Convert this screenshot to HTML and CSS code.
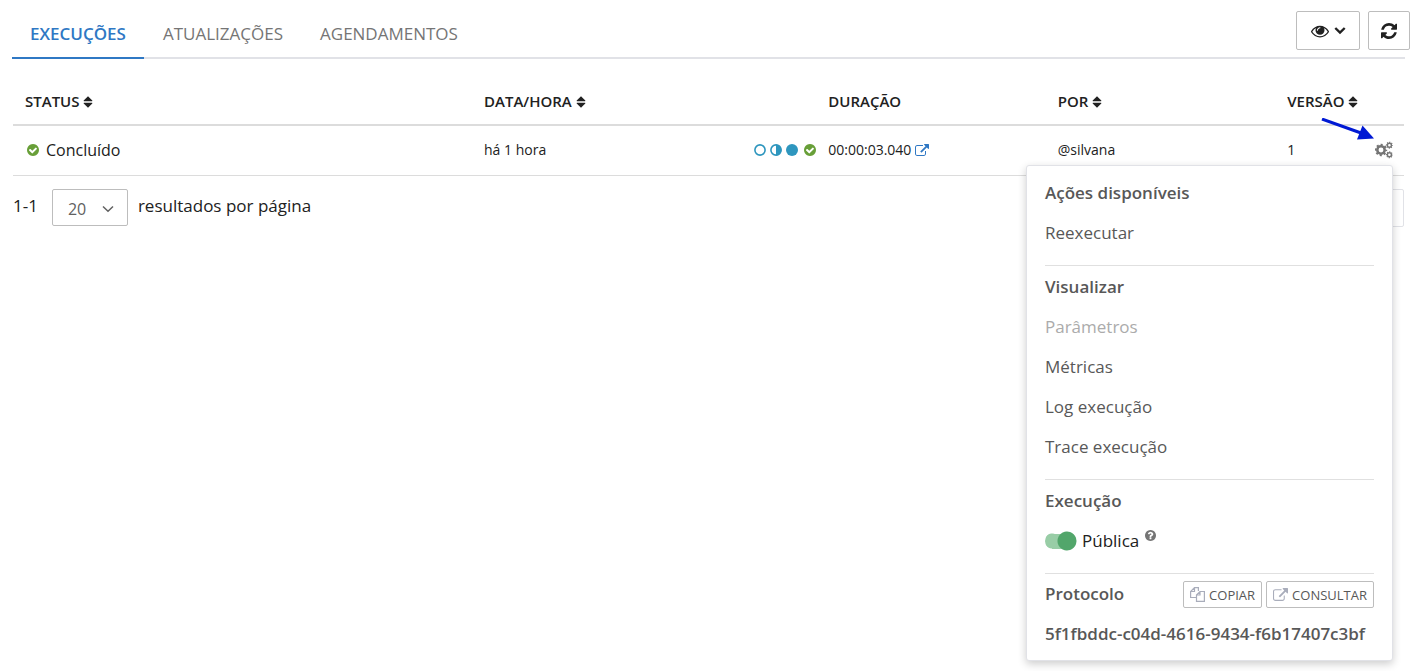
FILE: index.html
```
<!DOCTYPE html>
<html lang="pt-BR">
<head>
<meta charset="utf-8">
<meta name="viewport" content="width=device-width, initial-scale=1">
<title>Execuções</title>
<link rel="stylesheet" href="styles.css">
</head>
<body>
<svg class="sprite" aria-hidden="true">
  <symbol id="check" viewBox="128 128 1536 1536"><path d="M1412 734q0-28-18-46l-91-90q-19-19-45-19t-45 19l-408 407-226-226q-19-19-45-19t-45 19l-91 90q-18 18-18 46 0 27 18 45l362 362q19 19 45 19 27 0 46-19l543-543q18-18 18-45zm252 162q0 209-103 385.5t-279.5 279.5-385.5 103-385.5-103-279.5-279.5-103-385.5 103-385.5 279.5-279.5 385.5-103 385.5 103 279.5 279.5 103 385.5z"/></symbol>
  <symbol id="external" viewBox="64 64 1792 1536"><path d="M1472 992v320q0 119-84.5 203.5t-203.5 84.5h-832q-119 0-203.5-84.5t-84.5-203.5v-832q0-119 84.5-203.5t203.5-84.5h704q14 0 23 9t9 23v64q0 14-9 23t-23 9h-704q-66 0-113 47t-47 113v832q0 66 47 113t113 47h832q66 0 113-47t47-113v-320q0-14 9-23t23-9h64q14 0 23 9t9 23zm384-864v512q0 26-19 45t-45 19-45-19l-176-176-652 652q-10 10-23 10t-23-10l-114-114q-10-10-10-23t10-23l652-652-176-176q-19-19-19-45t19-45 45-19h512q26 0 45 19t19 45z"/></symbol>
  <symbol id="sort" viewBox="0 0 10 12"><path d="M5 0.3 9.3 4.6Q9.6 5.2 9 5.2H1Q.4 5.2.7 4.6ZM5 11.7.7 7.4Q.4 6.8 1 6.8H9Q9.6 6.8 9.3 7.4Z"/></symbol>
</svg>
<main class="page">
  <header class="topbar">
    <nav class="tabs">
      <a class="tab tab-active" href="#">EXECUÇÕES</a>
      <a class="tab" href="#">ATUALIZAÇÕES</a>
      <a class="tab" href="#">AGENDAMENTOS</a>
    </nav>
    <div class="tools">
      <button class="tool tool-wide" type="button" aria-label="Colunas visíveis">
        <svg width="18" height="18" viewBox="0 0 1792 1792"><path d="M1664 960q-152-236-381-353 61 104 61 225 0 185-131.5 316.5t-316.5 131.5-316.5-131.5-131.5-316.5q0-121 61-225-229 117-381 353 133 205 333.5 326.5t434.5 121.5 434.5-121.5 333.5-326.5zm-720-384q0-20-14-34t-34-14q-125 0-214.5 89.5t-89.5 214.5q0 20 14 34t34 14 34-14 14-34q0-86 61-147t147-61q20 0 34-14t14-34zm848 384q0 34-20 69-140 230-376.5 368.5t-499.5 138.5-499.5-139-376.5-368q-20-35-20-69t20-69q140-229 376.5-368t499.5-139 499.5 139 376.5 368q20 35 20 69z"/></svg>
        <svg width="12" height="8" viewBox="0 0 12 8"><path d="M1.3 1 6 5.600 10.7 1" fill="none" stroke="currentColor" stroke-width="2.4"/></svg>
      </button>
      <button class="tool" type="button" aria-label="Atualizar">
        <svg width="16" height="16" viewBox="128 128 1536 1536"><path d="M1639 1056q0 5-1 7-64 268-268 434.5t-478 166.5q-146 0-282.5-55t-243.5-157l-129 129q-19 19-45 19t-45-19-19-45v-448q0-26 19-45t45-19h448q26 0 45 19t19 45-19 45l-137 137q71 66 161 102t187 36q134 0 250-65t186-179q11-17 53-117 8-23 30-23h192q13 0 22.5 9.5t9.5 22.5zm25-800v448q0 26-19 45t-45 19h-448q-26 0-45-19t-19-45 19-45l138-138q-148-137-349-137-134 0-250 65t-186 179q-11 17-53 117-8 23-30 23h-199q-13 0-22.5-9.5t-9.5-22.5v-7q65-268 270-434.5t480-166.5q146 0 284 55.5t245 156.5l130-129q19-19 45-19t45 19 19 45z"/></svg>
      </button>
    </div>
  </header>

  <section class="content">
    <table class="runs">
      <colgroup><col class="c-status"><col class="c-date"><col class="c-steps"><col class="c-time"><col class="c-by"><col class="c-version"><col></colgroup>
      <thead>
        <tr>
          <th>STATUS <svg class="sort"><use href="#sort"/></svg></th>
          <th>DATA/HORA <svg class="sort"><use href="#sort"/></svg></th>
          <th></th>
          <th>DURAÇÃO</th>
          <th>POR <svg class="sort"><use href="#sort"/></svg></th>
          <th>VERSÃO <svg class="sort"><use href="#sort"/></svg></th>
          <th></th>
        </tr>
      </thead>
      <tbody>
        <tr>
          <td><div class="status"><svg class="dot green"><use href="#check"/></svg>Concluído</div></td>
          <td>há 1 hora</td>
          <td>
            <div class="steps">
              <svg class="dot" viewBox="0 0 12 12"><circle cx="6" cy="6" r="5.1" fill="none" stroke="currentColor" stroke-width="1.6"/></svg>
              <svg class="dot" viewBox="0 0 12 12"><circle cx="6" cy="6" r="5.1" fill="none" stroke="currentColor" stroke-width="1.6"/><path d="M6 .5a5.5 5.5 0 0 1 0 11z"/></svg>
              <svg class="dot" viewBox="0 0 12 12"><circle cx="6" cy="6" r="6"/></svg>
              <svg class="dot dot-end green"><use href="#check"/></svg>
            </div>
          </td>
          <td><div class="time">00:00:03.040 <a class="open" href="#" aria-label="Abrir execução"><svg width="14" height="12"><use href="#external"/></svg></a></div></td>
          <td>@silvana</td>
          <td>1</td>
          <td class="actions">
            <div class="menu-anchor">
              <button class="gear" type="button" aria-label="Ações">
                <svg class="outline" width="18" height="18" viewBox="0 0 18 18" stroke="currentColor">
                  <circle cx="6" cy="9" r="3.7" stroke-width="2.5"/>
                  <circle cx="6" cy="9" r="5.3" stroke-width="1.8" stroke-dasharray="2.081 2.081" stroke-dashoffset="1.04"/>
                  <circle cx="14.4" cy="4.2" r="2" stroke-width="1.4"/>
                  <circle cx="14.4" cy="4.2" r="2.9" stroke-width="1.2" stroke-dasharray="1.139 1.139" stroke-dashoffset=".57"/>
                  <circle cx="14.4" cy="13.8" r="2" stroke-width="1.4"/>
                  <circle cx="14.4" cy="13.8" r="2.9" stroke-width="1.2" stroke-dasharray="1.139 1.139" stroke-dashoffset=".57"/>
                </svg>
              </button>
              <svg class="pointer" viewBox="0 0 54 24" aria-hidden="true"><path d="M1 1 40 15" stroke="#0019d4" stroke-width="3"/><path d="M41.5 7.5 53 20.500 36 21.500Z" fill="#0019d4"/></svg>
              <div class="menu">
                <section class="group">
                  <h2 class="item title">Ações disponíveis</h2>
                  <a class="item" href="#">Reexecutar</a>
                </section>
                <section class="group">
                  <h2 class="item title">Visualizar</h2>
                  <a class="item disabled" aria-disabled="true">Parâmetros</a>
                  <a class="item" href="#">Métricas</a>
                  <a class="item" href="#">Log execução</a>
                  <a class="item" href="#">Trace execução</a>
                </section>
                <section class="group">
                  <h2 class="item title">Execução</h2>
                  <div class="item">
                    <input class="switch" type="checkbox" id="public" checked>
                    <label class="switch-label" for="public">Pública</label>
                    <svg class="help" viewBox="128 128 1536 1536"><path d="M1024 1376v-192q0-14-9-23t-23-9h-192q-14 0-23 9t-9 23v192q0 14 9 23t23 9h192q14 0 23-9t9-23zm256-672q0-88-55.5-163t-138.5-116-170-41q-243 0-371 213-15 24 8 42l132 100q7 6 19 6 16 0 25-12 53-68 86-92 34-24 86-24 48 0 85.5 26t37.5 59q0 38-20 61t-68 45q-63 28-115.5 86.5t-52.5 125.5v36q0 14 9 23t23 9h192q14 0 23-9t9-23q0-19 21.5-49.5t54.5-49.5q32-18 49-28.5t46-35 44.5-48 28-60.5 12.5-81zm384 192q0 209-103 385.5t-279.5 279.5-385.5 103-385.5-103-279.5-279.5-103-385.5 103-385.5 279.5-279.5 385.5-103 385.5 103 279.5 279.5 103 385.5z"/></svg>
                  </div>
                </section>
                <section class="group">
                  <div class="item protocol">
                    <h2 class="title">Protocolo</h2>
                    <div class="buttons">
                      <button class="mini" type="button"><svg class="outline" width="15" height="15" viewBox="0 0 15 15" stroke="currentColor" stroke-width="1.2"><path d="M6 10.500H.6V4.500L4.500.6H8.400V4M4.500.6V4.500H.6M6.500 8 10 4.500H14.400V14.400H6.500ZM10 4.500V8H6.500"/></svg>COPIAR</button>
                      <button class="mini" type="button"><svg width="15" height="13"><use href="#external"/></svg>CONSULTAR</button>
                    </div>
                  </div>
                  <div class="item title">5f1fbddc-c04d-4616-9434-f6b17407c3bf</div>
                </section>
              </div>
            </div>
          </td>
        </tr>
      </tbody>
    </table>

    <footer class="pager">
      <span>1-1</span>
      <div class="select-box">
        <select class="page-size" id="page-size"><option>20</option><option>50</option></select>
        <svg class="chevron" viewBox="0 0 12 8"><path d="M1 1.500 6 6.300 11 1.500" fill="none" stroke="currentColor" stroke-width="1.500"/></svg>
      </div>
      <label for="page-size">resultados por página</label>
      <button class="page-nav" type="button" aria-label="Próxima página"></button>
    </footer>
  </section>
</main>
</body>
</html>
```
FILE: styles.css
```
* { box-sizing: border-box; }
body {
  margin: 0;
  background: #fff;
  color: #212121;
  font: 17px/24px "Open Sans", sans-serif;
}
button, select { font: inherit; color: inherit; }
a { color: inherit; text-decoration: none; }
h2 { margin: 0; font-size: inherit; }
svg { fill: currentColor; flex: none; }
.outline { fill: none; }
.sprite { display: none; }
.page { min-height: 100vh; padding: 10px 12px 0; }

.topbar {
  display: flex;
  justify-content: space-between;
  align-items: flex-start;
  border-bottom: 2px solid #e1e2e7;
}
.tabs { display: flex; gap: 1px; margin-bottom: -2px; }
.tab {
  padding: 12px 18px 11px;
  border-bottom: 2px solid transparent;
  color: #757575;
}
.tab-active {
  color: #2f78c4;
  border-color: #2f78c4;
  font-weight: 600;
}
.tools { display: flex; gap: 8px; margin: 1px -5px 0 0; }
.tool {
  display: flex;
  align-items: center;
  justify-content: center;
  gap: 5px;
  width: 42px;
  height: 39px;
  padding: 0;
  background: #fff;
  border: 1px solid #bdbdbd;
  border-radius: 2px;
}
.tool-wide { width: 64px; }

.content { padding: 18px 1px 0; }
.runs {
  width: 100%;
  table-layout: fixed;
  border-collapse: separate;
  border-spacing: 0;
  font-size: 14px;
}
.c-status { width: 33%; }
.c-date, .c-time, .c-by { width: 16.5%; }
.c-steps { width: 8.25%; }
.c-version { width: 6.25%; }
.runs th {
  height: 49px;
  padding: 0 0 0 12px;
  border-bottom: 2px solid #dcdcdc;
  font-size: 15px;
  font-weight: 600;
  text-align: left;
  white-space: nowrap;
}
.runs td {
  height: 50px;
  padding: 0 0 2px 12px;
  border-bottom: 1px solid #dcdcdc;
}
.sort { width: 10px; height: 12px; vertical-align: -1px; }
.status { display: flex; align-items: center; gap: 7px; padding-left: 2px; font-size: 16px; }
.dot { width: 12px; height: 12px; }
.green { color: #689f38; }
.steps { display: flex; justify-content: flex-end; gap: 4px; color: #2e96be; }
.dot-end { margin-left: 2px; }
.time { display: flex; align-items: center; gap: 4px; }
.open { display: flex; color: #2f78c4; }

.runs .actions { padding: 0 11px 2px 0; }
.menu-anchor { position: relative; display: flex; justify-content: flex-end; }
.gear {
  display: flex;
  padding: 0;
  border: 0;
  background: none;
  color: #757575;
}
.pointer { position: absolute; right: 18px; top: -23px; width: 54px; height: 24px; }
.menu {
  position: absolute;
  top: 24px;
  right: 0;
  z-index: 1;
  min-width: 367px;
  padding: 7px 18px 6px;
  background: #fff;
  border: 1px solid #e1e2e7;
  border-radius: 3px;
  box-shadow: 0 3px 8px rgba(0, 0, 0, .2);
  color: #585858;
  font-size: 17px;
  white-space: nowrap;
}
.group + .group { margin-top: 12px; padding-top: 1px; border-top: 1px solid #e0e0e0; }
.group + .group:last-child { padding-top: 0; }
.item { display: flex; align-items: center; height: 40px; }
.title { font-weight: 600; }
.disabled { color: #ababab; }
.switch {
  appearance: none;
  width: 32px;
  height: 20px;
  margin: 0 5px 0 0;
  border-radius: 10px;
  background:
    radial-gradient(circle at 22px 10px, #52a66b 9px, transparent 10px),
    linear-gradient(#98cda6, #98cda6) 7px 3px / 16px 15px no-repeat,
    radial-gradient(circle at 7px 10px, #98cda6 7px, transparent 8px);
}
.switch-label { color: #212121; }
.help { width: 11px; height: 11px; margin: 0 0 10px 6px; color: #757575; }
.protocol { justify-content: space-between; }
.buttons { display: flex; gap: 4px; padding-top: 2px; }
.mini {
  display: flex;
  align-items: center;
  gap: 4px;
  height: 27px;
  padding: 0 6px;
  background: #fff;
  border: 1px solid #bdbdbd;
  border-radius: 2px;
  font-size: 13px;
}
.mini svg { color: #a9adbb; }

.pager { display: flex; align-items: flex-start; padding-top: 13px; line-height: 33px; }
.select-box { position: relative; margin: 0 10px 0 14px; }
.page-size {
  appearance: none;
  display: block;
  width: 76px;
  height: 37px;
  padding: 3px 15px 0;
  background: #fff;
  border: 1px solid #bdbdbd;
  border-radius: 2px;
  color: #616161;
  font-size: 16px;
}
.chevron { position: absolute; right: 14px; top: 16px; width: 12px; height: 8px; color: #616161; pointer-events: none; }
.page-nav {
  width: 40px;
  height: 38px;
  margin-left: auto;
  background: #fff;
  border: 1px solid #e1e2e7;
  border-radius: 2px;
}
```
